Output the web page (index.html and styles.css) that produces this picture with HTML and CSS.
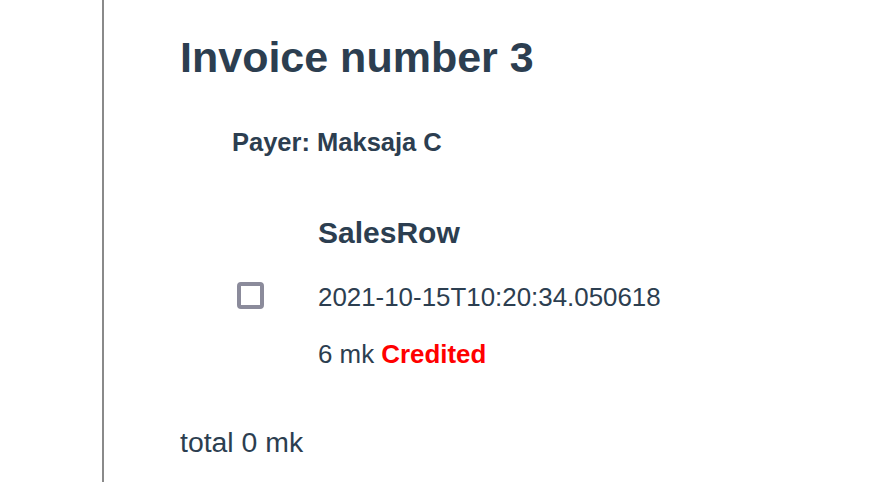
FILE: index.html
```html
<!DOCTYPE html>
<html>
<head>
<meta charset="utf-8">
<link rel="stylesheet" href="styles.css">
</head>
<body>
<div class="page">
  <div class="rule"></div>
  <main class="content">
    <h1 class="title">Invoice number 3</h1>
    <h3 class="payer">Payer: Maksaja C</h3>
    <div class="row">
      <div class="check-col"><span class="checkbox"></span></div>
      <div class="info">
        <h2 class="row-title">SalesRow</h2>
        <p class="date">2021-10-15T10:20:34.050618</p>
        <p class="amount">6 mk <strong class="credited">Credited</strong></p>
      </div>
    </div>
    <p class="total">total 0 mk</p>
  </main>
</div>
</body>
</html>
```
FILE: styles.css
```css
html, body {
  margin: 0;
  padding: 0;
  background: #fff;
}
body {
  font-family: "Liberation Sans", Arial, sans-serif;
  color: #2c3e50;
}
.page {
  display: flex;
  height: 482px;
  overflow: hidden;
}
.rule {
  width: 2px;
  margin-left: 102px;
  background: #8a8a8a;
  flex: none;
}
.content {
  padding-left: 76px;
  padding-top: 32px;
}
.title {
  margin: 0;
  font-size: 43px;
  line-height: 50px;
  font-weight: bold;
}
.payer {
  margin: 45px 0 0 52px;
  font-size: 25.5px;
  line-height: 30px;
  font-weight: bold;
}
.row {
  display: flex;
  margin-top: 59px;
}
.check-col {
  width: 138px;
  padding-left: 57px;
  box-sizing: border-box;
  padding-top: 66px;
}
.checkbox {
  display: block;
  width: 27px;
  height: 27px;
  box-sizing: border-box;
  border: 4px solid #8b8b9b;
  border-radius: 4px;
  background: #fff;
}
.info {
  display: flex;
  flex-direction: column;
}
.row-title {
  margin: 0;
  font-size: 30px;
  line-height: 34px;
  font-weight: bold;
}
.date {
  margin: 32px 0 0;
  font-size: 25.9px;
  line-height: 30px;
}
.amount {
  margin: 27px 0 0;
  font-size: 25.9px;
  line-height: 30px;
}
.credited {
  color: #ff0000;
}
.total {
  margin: 57px 0 0;
  font-size: 28.4px;
  line-height: 33px;
}
```
